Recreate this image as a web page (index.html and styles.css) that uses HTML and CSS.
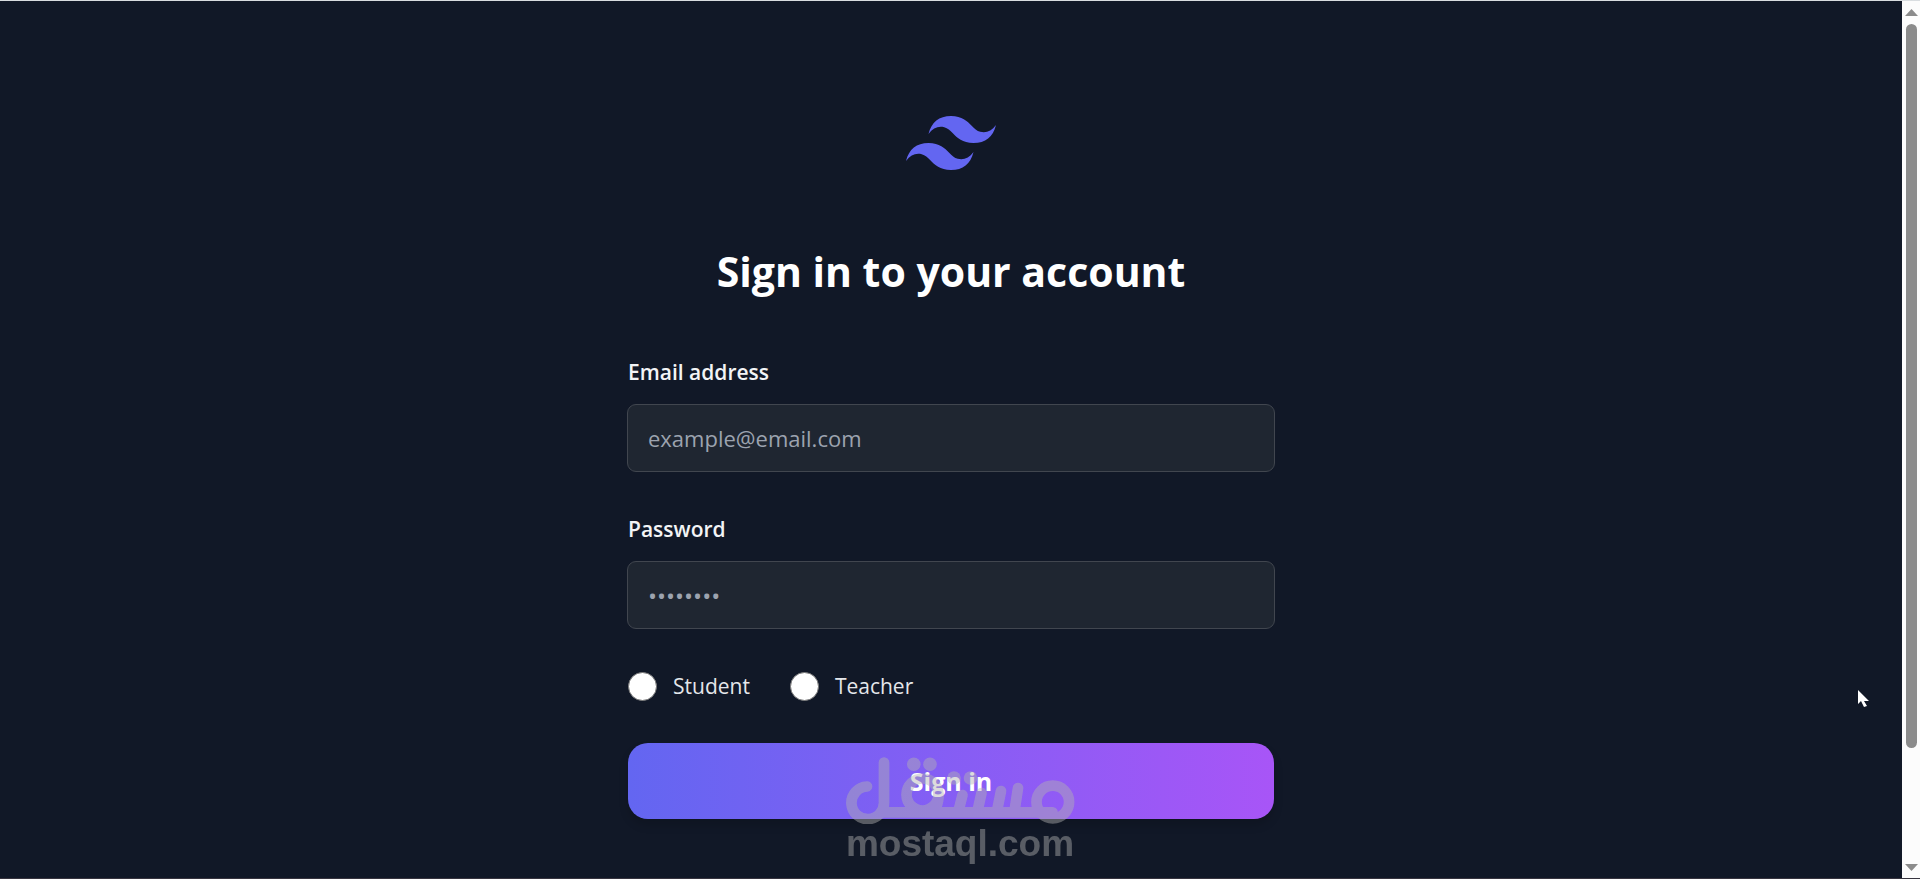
FILE: index.html
```html
<!DOCTYPE html>
<html lang="en">
<head>
<meta charset="utf-8">
<title>Sign in</title>
<link rel="stylesheet" href="styles.css">
</head>
<body>
<div class="window">
  <main class="page">
    <svg class="logo" viewBox="0 0 54 33" aria-hidden="true"><path fill="#6366f1" fill-rule="evenodd" d="M27 0c-7.2 0-11.7 3.6-13.5 10.8 2.7-3.6 5.85-4.95 9.45-4.05 2.054.513 3.522 2.004 5.147 3.653C30.744 13.09 33.808 16.2 40.5 16.2c7.2 0 11.7-3.6 13.5-10.8-2.7 3.6-5.85 4.95-9.45 4.05-2.054-.513-3.522-2.004-5.147-3.653C36.756 3.11 33.692 0 27 0zM13.5 16.2C6.3 16.2 1.8 19.8 0 27c2.7-3.6 5.85-4.95 9.45-4.05 2.054.514 3.522 2.004 5.147 3.653C17.244 29.29 20.308 32.4 27 32.4c7.2 0 11.7-3.6 13.5-10.8-2.7 3.6-5.85 4.95-9.45 4.05-2.054-.513-3.522-2.004-5.147-3.653C23.256 19.31 20.192 16.2 13.5 16.2z" clip-rule="evenodd"/></svg>
    <h1 class="title">Sign in to your account</h1>
    <form class="form">
      <div class="field">
        <label class="label" for="email">Email address</label>
        <input class="input" id="email" type="email" placeholder="example@email.com">
      </div>
      <div class="field">
        <label class="label" for="password">Password</label>
        <input class="input input-password" id="password" type="password" placeholder="••••••••">
      </div>
      <div class="roles">
        <label class="role" for="student"><input class="radio" id="student" type="radio" name="role">Student</label>
        <label class="role" for="teacher"><input class="radio" id="teacher" type="radio" name="role">Teacher</label>
      </div>
      <button class="submit" type="submit">Sign in</button>
    </form>
  </main>
  <div class="scrollbar" aria-hidden="true">
    <svg class="arrow" viewBox="0 0 13 7"><path fill="#8b8b8b" d="M6.500 0 13 7H0z"/></svg>
    <div class="track"><div class="thumb"></div></div>
    <svg class="arrow" viewBox="0 0 13 7"><path fill="#8b8b8b" d="M0 0h13L6.500 7z"/></svg>
  </div>
</div>
<div class="watermark">
  <svg class="watermark-mark" viewBox="0 0 229 67" role="img" aria-label="مستقل">
    <g fill="none" stroke="#fff" stroke-width="10.700" stroke-linecap="round" stroke-linejoin="round">
      <path d="M21.500 29.500A16.300 16.300 0 1 0 38.500 45V5.500"/>
      <path d="M36 55.300H207"/>
      <circle cx="77" cy="37.500" r="16"/>
      <path d="M93 38Q93 48 88 55"/>
      <path d="M117 38 113 54M136 36 132 54M155.500 34 151.500 54M172.500 31 169 54"/>
      <circle cx="207.300" cy="45" r="16.300"/>
    </g>
    <g fill="#fff"><circle cx="68.300" cy="7.300" r="6.800"/><circle cx="84.500" cy="7.300" r="6.800"/><circle cx="108.500" cy="21" r="6.800"/><circle cx="125" cy="21" r="6.800"/></g>
  </svg>
  <span class="watermark-text">mostaql.com</span>
</div>
<svg class="cursor" viewBox="0 0 11 17" aria-hidden="true"><path fill="#fff" d="M0 0v14l3-3 3 6 3-1-3-5h5z"/></svg>
</body>
</html>
```
FILE: styles.css
```css
* { box-sizing: border-box; }
body {
  margin: 0;
  background: #111827;
  color: #fff;
  font-family: "Segoe UI", "Open Sans", "Noto Sans", sans-serif;
}
.window {
  display: flex;
  min-height: 100vh;
  border-top: 1px solid #d9dde0;
  border-bottom: 1px solid #37343f;
}
.page {
  flex: 1;
  display: flex;
  flex-direction: column;
  align-items: center;
  padding: 115px 40px 48px;
}
.logo { width: 90px; height: 55px; }
.title {
  margin: 70px 0 0;
  font-size: 41px;
  line-height: 60px;
  font-weight: 700;
}
.form {
  width: 100%;
  max-width: 648px;
  margin-top: 54px;
  display: flex;
  flex-direction: column;
}
.field {
  display: flex;
  flex-direction: column;
  gap: 15px;
  margin-bottom: 40px;
}
.label {
  padding-left: 1px;
  font-size: 21px;
  line-height: 34px;
  font-weight: 600;
  color: #f3f4f6;
}
.input {
  height: 68px;
  width: 100%;
  padding: 0 20px;
  border: 1px solid #41464f;
  border-radius: 9px;
  background: #1f2631;
  color: #fff;
  font: inherit;
  font-size: 22px;
}
.input-password { font-size: 24px; }
.input::placeholder { color: #9ca3af; opacity: 1; }
.roles { display: flex; gap: 40px; padding-left: 1px; }
.role {
  display: flex;
  align-items: center;
  gap: 16px;
  font-size: 21px;
  line-height: 34px;
  color: #e5e7eb;
}
.radio {
  appearance: none;
  width: 29px;
  height: 29px;
  margin: 0;
  border: 1px solid #767676;
  border-radius: 50%;
  background: #fff;
}
.submit {
  margin: 40px 1px 0;
  height: 76px;
  border: 0;
  border-radius: 20px;
  background: linear-gradient(to right, #6366f1, #a855f7);
  box-shadow: 0 6px 10px rgba(0, 0, 0, .15);
  color: #fff;
  font: inherit;
  font-size: 25px;
  font-weight: 700;
}
.scrollbar {
  width: 18px;
  display: flex;
  flex-direction: column;
  align-items: center;
  padding: 8px 0 7px;
  background: #fcfcfc;
}
.arrow { width: 13px; height: 7px; }
.track { flex: 1; padding: 8px 0; }
.thumb {
  width: 11px;
  height: 87%;
  border-radius: 6px;
  background: #8b8b8b;
}
.watermark {
  position: fixed;
  left: 50%;
  bottom: 15px;
  transform: translateX(-50%);
  width: 230px;
  display: flex;
  flex-direction: column;
  align-items: center;
  filter: brightness(.7);
  opacity: .45;
  pointer-events: none;
}
.watermark-mark { width: 230px; height: 67px; }
.watermark-text {
  font-family: Arial, "Liberation Sans", sans-serif;
  font-size: 37px;
  line-height: 40px;
  font-weight: 700;
}
.cursor {
  position: fixed;
  right: 51px;
  bottom: 172px;
  width: 11px;
  height: 17px;
}
```
